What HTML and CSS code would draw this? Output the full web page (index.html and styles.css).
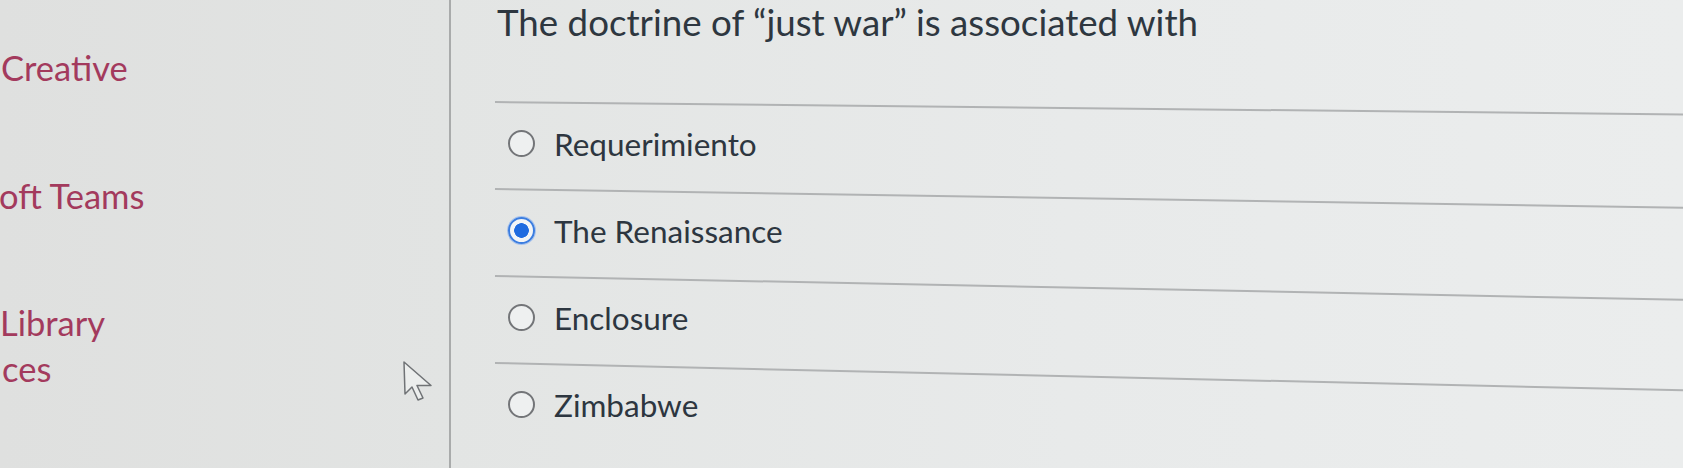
FILE: index.html
```html
<!DOCTYPE html>
<html lang="en">
<head>
<meta charset="utf-8">
<title>Quiz question</title>
<link rel="stylesheet" href="styles.css">
</head>
<body>
<div class="page">
  <nav class="sidebar">
    <a class="nav-item creative">Creative</a>
    <a class="nav-item teams">oft Teams</a>
    <a class="nav-item library">Library<br><span class="ces">ces</span></a>
    <svg class="cursor" width="32" height="44" viewBox="0 0 32 44">
      <path d="M1 1 L2 33 L9 26 L15 39 L20 37 L14 24.5 L28 24.5 Z" fill="#eceeed" stroke="#707376" stroke-width="1.5" stroke-linejoin="round"/>
    </svg>
  </nav>
  <main class="content">
    <h1 class="question">The doctrine of “just war” is associated with</h1>
    <div class="answers">
      <hr class="sep sep-1">
      <label class="answer"><span class="radio"></span><span class="answer-text">Requerimiento</span></label>
      <hr class="sep sep-2">
      <label class="answer"><span class="radio checked"></span><span class="answer-text">The Renaissance</span></label>
      <hr class="sep sep-3">
      <label class="answer"><span class="radio"></span><span class="answer-text">Enclosure</span></label>
      <hr class="sep sep-4">
      <label class="answer"><span class="radio"></span><span class="answer-text">Zimbabwe</span></label>
    </div>
  </main>
</div>
</body>
</html>
```
FILE: styles.css
```css
html, body {
  margin: 0;
  padding: 0;
}
body {
  width: 1683px;
  height: 468px;
  overflow: hidden;
  font-family: Lato, "Noto Sans", sans-serif;
  background: #e6e8e7;
}
.page {
  display: flex;
  height: 468px;
}
.sidebar {
  position: relative;
  width: 451px;
  flex: 0 0 451px;
  border-right: 2px solid #a9abab;
  background: linear-gradient(to right, #dfe0df, #e2e4e3);
  display: flex;
  flex-direction: column;
  padding-top: 45px;
  box-sizing: border-box;
  overflow: hidden;
}
.nav-item {
  display: block;
  font-size: 34.5px;
  line-height: 46px;
  color: #a33a5d;
  white-space: nowrap;
}
.creative {
  padding-left: 1px;
  margin-bottom: 82px;
}
.teams {
  margin-left: -1px;
  margin-bottom: 81px;
}
.library {
  margin-left: 0;
}
.ces {
  padding-left: 2px;
}
.cursor {
  position: absolute;
  left: 403px;
  top: 361px;
}
.content {
  flex: 1;
  padding-left: 44px;
  background: linear-gradient(to right, #e3e5e4, #e8eaea 50%, #ebeded);
  overflow: hidden;
}
.question {
  margin: 0 0 0 2px;
  font-size: 36.7px;
  line-height: 44px;
  font-weight: 400;
  color: #2e3740;
  white-space: nowrap;
}
.answers {
  margin-top: 57px;
  display: flex;
  flex-direction: column;
}
.sep {
  margin: 0;
  border: 0;
  height: 1.5px;
  width: 1300px;
  background: #b1b3b4;
  transform-origin: left center;
}
.sep-1 { transform: rotate(0.6deg); }
.sep-2 { transform: rotate(0.9deg); }
.sep-3 { transform: rotate(1.15deg); }
.sep-4 { transform: rotate(1.32deg); }
.answer {
  height: 85.5px;
  box-sizing: border-box;
  padding: 0 0 3px 13px;
  display: flex;
  align-items: center;
}
.radio {
  width: 27px;
  height: 27px;
  box-sizing: border-box;
  border: 2px solid #737578;
  border-radius: 50%;
  background: #eef0f0;
  flex: 0 0 auto;
}
.radio.checked {
  border: 2.5px solid #3b7de0;
  box-shadow: 0 0 0 1px #a5c2ee;
  background: radial-gradient(circle, #1f6be0 0 7px, #f3f5f7 7.6px);
}
.answer-text {
  margin-left: 19px;
  font-size: 31.5px;
  color: #2d3640;
  line-height: 38px;
}
```
